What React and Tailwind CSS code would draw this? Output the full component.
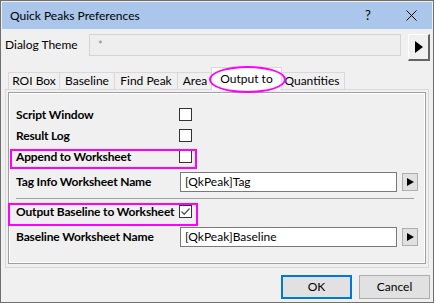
import React from "react";

const font = { fontFamily: 'Lato, "Liberation Sans", Arial, sans-serif' };

function Checkbox({ checked }) {
    return (
        <div className="w-[13px] h-[13px] -ml-[1px] border border-[#333333] bg-white flex items-center justify-center">
            {checked && (
                <svg width="11" height="11" viewBox="0 0 11 11">
                    <path d="M1.5 5.5 L4.2 8.2 L9.5 2.5" fill="none" stroke="#555555" strokeWidth="1.3" />
                </svg>
            )}
        </div>
    );
}

function SmallArrow() {
    return (
        <div className="w-[16px] h-[18px] ml-[5px] border border-[#adadad] bg-[#e1e1e1] flex items-center justify-center">
            <svg width="7" height="8" viewBox="0 0 7 8">
                <path d="M0 0 L7 4 L0 8 Z" fill="#000" />
            </svg>
        </div>
    );
}

function Row({ label, children, className }) {
    return (
        <div className={"flex items-center " + (className || "")}>
            <div className="w-[170px] pl-[6px] font-bold text-[12px] tracking-[-0.15px] text-black whitespace-nowrap">{label}</div>
            {children}
        </div>
    );
}

const tabs = [
    { name: "ROI Box", w: "w-[52px]" },
    { name: "Baseline", w: "w-[55px]" },
    { name: "Find Peak", w: "w-[63px]" },
    { name: "Area", w: "w-[35px]" },
    { name: "Output to", w: "w-[71px]", active: true },
    { name: "Quantities", w: "w-[65px]" },
];

export default function App() {
    return (
        <div className="w-[436px] h-[303px] bg-white relative overflow-hidden" style={font}>
            <div className="w-[434px] h-[303px] border border-[#6f6f6f] bg-[#f0f0f0] flex flex-col p-[1px]">
                {/* title bar */}
                <div className="h-[27px] bg-[#aac6ea] flex items-center pl-[8px] text-[12px] text-black">
                    <span className="flex-1">Quick Peaks Preferences</span>
                    <span className="w-[20px] text-center text-[13px] mr-[28px]">?</span>
                    <svg width="11" height="11" viewBox="0 0 11 11" className="mr-[15px]">
                        <path d="M0.5 0.5 L10.5 10.5 M10.5 0.5 L0.5 10.5" stroke="#000" strokeWidth="1" />
                    </svg>
                </div>

                {/* dialog theme */}
                <div className="flex items-start mt-[5px] pl-[3px]">
                    <div className="w-[84px] h-[22px] flex items-center text-[12px] text-black">Dialog Theme</div>
                    <div className="w-[312px] h-[22px] border border-[#d4d4d4] bg-[#eeeeee] flex items-center pl-[8px] text-[11px] text-[#8a8a8a]">
                        *
                    </div>
                    <div className="ml-[7px] w-[22px] h-[27px] bg-[#f0f0f0] border-t border-l border-white border-r-2 border-b-2 border-r-[#646464] border-b-[#646464] flex items-center justify-center">
                        <svg width="8" height="12" viewBox="0 0 8 12">
                            <path d="M0 0 L8 6 L0 12 Z" fill="#000" />
                        </svg>
                    </div>
                </div>

                {/* tabs */}
                <div className="flex items-end pl-[6px] mt-[6px] h-[23px] relative z-10">
                    {tabs.map((t) =>
                        t.active ? (
                            <div
                                key={t.name}
                                className={"h-[23px] -mx-[2px] bg-white border border-b-0 border-[#d9d9d9] flex items-center justify-center text-[12px] text-black " + t.w}
                            >
                                {t.name}
                            </div>
                        ) : (
                            <div
                                key={t.name}
                                className={"h-[18px] border border-l-0 first:border-l border-[#d9d9d9] flex items-center justify-center text-[12px] text-black " + t.w}
                            >
                                {t.name}
                            </div>
                        )
                    )}
                </div>

                {/* tab panel */}
                <div className="mx-[3px] h-[179px] border border-[#d9d9d9] bg-[#f0f0f0] p-[2px] pb-[3px] -mt-[1px]">
                    <div className="h-full border border-[#a0a0a0]">
                        <div className="h-full border border-white flex flex-col">
                            <Row label="Script Window" className="h-[21px] mt-[10px]">
                                <Checkbox />
                            </Row>
                            <Row label="Result Log" className="h-[21px]">
                                <Checkbox />
                            </Row>
                            <Row label="Append to Worksheet" className="h-[21px]">
                                <Checkbox />
                            </Row>
                            <Row label="Tag Info Worksheet Name" className="h-[22px] mt-[4px]">
                                <div className="w-[217px] h-[20px] border border-[#7a7a7a] bg-white flex items-center pl-[4px] text-[12px] text-black">
                                    [QkPeak]Tag
                                </div>
                                <SmallArrow />
                            </Row>
                            <div className="ml-[6px] mt-[5px] w-[398px] h-[1px] bg-[#a0a0a0]" />
                            <Row label="Output Baseline to Worksheet" className="h-[21px] mt-[2px]">
                                <Checkbox checked />
                            </Row>
                            <Row label="Baseline Worksheet Name" className="h-[22px] mt-[4px]">
                                <div className="w-[217px] h-[20px] border border-[#7a7a7a] bg-white flex items-center pl-[4px] text-[12px] text-black">
                                    [QkPeak]Baseline
                                </div>
                                <SmallArrow />
                            </Row>
                        </div>
                    </div>
                </div>

                {/* buttons */}
                <div className="flex justify-end gap-[7px] mt-[7px] pr-[2px]">
                    <div className="w-[71px] h-[24px] border-2 border-[#0078d7] bg-[#e1e1e1] flex items-center justify-center text-[12px] text-black">
                        OK
                    </div>
                    <div className="w-[71px] h-[24px] border border-[#adadad] bg-[#e1e1e1] flex items-center justify-center text-[12px] text-black">
                        Cancel
                    </div>
                </div>
            </div>

            {/* annotations */}
            <div className="absolute left-[209px] top-[66px] w-[77px] h-[27px] rounded-[50%] border-2 border-[#ff00ff] pointer-events-none z-20" />
            <div className="absolute left-[10px] top-[149px] w-[187px] h-[20px] border-2 border-[#ff00ff] pointer-events-none" />
            <div className="absolute left-[8px] top-[203px] w-[190px] h-[23px] border-2 border-[#ff00ff] pointer-events-none" />
        </div>
    );
}
